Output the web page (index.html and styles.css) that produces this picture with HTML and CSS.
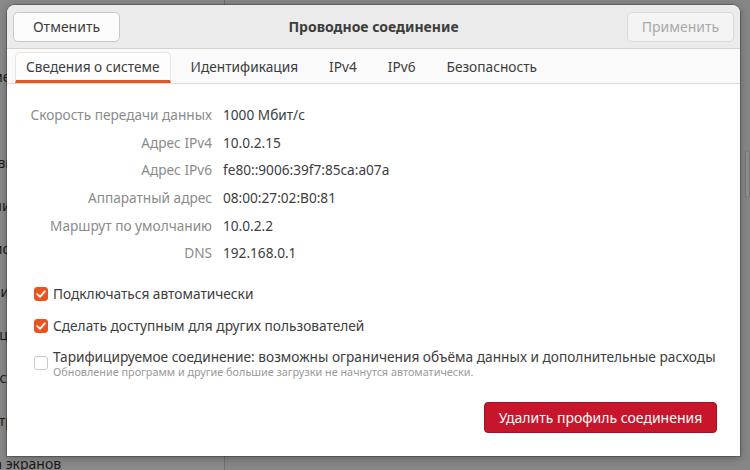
FILE: index.html
```html
<!DOCTYPE html>
<html lang="ru">
<head>
    <meta charset="UTF-8">
    <title>Проводное соединение</title>
    <link rel="stylesheet" href="styles.css">
</head>
<body>

<!-- Settings window behind the dialog (dimmed) -->
<div class="backdrop">
    <aside class="sidebar">
        <div class="side-list">
            <div class="side-item">Сетевой</div>
            <div class="side-item">Буфер обмен</div>
            <div class="side-item">Фон</div>
            <div class="side-item">Внешний вид</div>
            <div class="side-item">Оповещения и уведомле</div>
            <div class="side-item">Поиск в систе</div>
            <div class="side-item">Приложение</div>
            <div class="side-item">Конфиденц</div>
            <div class="side-item">Общий досту</div>
            <div class="side-item">Звуки и устройства</div>
            <div class="side-item">Настройка экранов</div>
        </div>
    </aside>
    <main class="panel">
        <div class="panel-widget"></div>
    </main>
</div>

<!-- Dialog -->
<div class="dialog">
    <header class="dialog-header">
        <button class="btn">Отменить</button>
        <h1 class="dialog-title">Проводное соединение</h1>
        <button class="btn" disabled>Применить</button>
    </header>

    <nav class="tabs">
        <div class="tab active">Сведения о системе</div>
        <div class="tab">Идентификация</div>
        <div class="tab">IPv4</div>
        <div class="tab">IPv6</div>
        <div class="tab">Безопасность</div>
    </nav>

    <section class="content">
        <div class="info">
            <span class="info-label">Скорость передачи данных</span>
            <span class="info-value">1000 Мбит/с</span>
            <span class="info-label">Адрес IPv4</span>
            <span class="info-value">10.0.2.15</span>
            <span class="info-label">Адрес IPv6</span>
            <span class="info-value">fe80::9006:39f7:85ca:a07a</span>
            <span class="info-label">Аппаратный адрес</span>
            <span class="info-value">08:00:27:02:B0:81</span>
            <span class="info-label">Маршрут по умолчанию</span>
            <span class="info-value">10.0.2.2</span>
            <span class="info-label">DNS</span>
            <span class="info-value">192.168.0.1</span>
        </div>

        <div class="options">
            <label class="option">
                <span class="check checked">
                    <svg viewBox="0 0 14 14" width="14" height="14"><path d="M3.2 7.2 L6 9.8 L10.8 4.4" fill="none" stroke="#fff" stroke-width="1.8" stroke-linecap="round" stroke-linejoin="round"/></svg>
                </span>
                <span class="option-text">Подключаться автоматически</span>
            </label>
            <label class="option">
                <span class="check checked">
                    <svg viewBox="0 0 14 14" width="14" height="14"><path d="M3.2 7.2 L6 9.8 L10.8 4.4" fill="none" stroke="#fff" stroke-width="1.8" stroke-linecap="round" stroke-linejoin="round"/></svg>
                </span>
                <span class="option-text">Сделать доступным для других пользователей</span>
            </label>
            <label class="option multi">
                <span class="check"></span>
                <span class="option-text">
                    <span class="option-title">Тарифицируемое соединение: возможны ограничения объёма данных и дополнительные расходы</span>
                    <small class="option-hint">Обновление программ и другие большие загрузки не начнутся автоматически.</small>
                </span>
            </label>
        </div>

        <button class="btn-danger">Удалить профиль соединения</button>
    </section>
</div>

</body>
</html>
```

FILE: styles.css
```css
body {
    margin: 0;
    width: 750px;
    height: 470px;
    overflow: hidden;
    position: relative;
    font-family: 'Noto Sans', 'Open Sans', sans-serif;
    color: #3d3d3d;
    background: #878787;
}

/* Dimmed window behind */
.backdrop {
    display: flex;
    height: 470px;
}

.sidebar {
    width: 224px;
    border-right: 1px solid #6f6f6f;
    overflow: hidden;
    background: #898989;
}

.side-list {
    margin-left: -70px;
    padding-top: 24px;
    display: flex;
    flex-direction: column;
    gap: 23px;
}

.side-item {
    font-size: 14px;
    line-height: 20px;
    color: #1a1a1a;
    white-space: nowrap;
}

.panel {
    flex: 1;
    background: #868686;
    padding-top: 150px;
}

.panel-widget {
    margin-left: 520px;
    height: 46px;
    border: 1px solid #757575;
    border-radius: 5px;
    background: #8c8c8c;
}

/* Dialog */
.dialog {
    position: absolute;
    left: 7px;
    top: 5px;
    width: 733px;
    height: 451px;
    background: #fff;
    border-radius: 8px 8px 0 0;
    box-shadow: 0 0 0 1px rgba(0, 0, 0, 0.22), 0 2px 8px rgba(0, 0, 0, 0.3);
    display: flex;
    flex-direction: column;
    overflow: hidden;
}

.dialog-header {
    height: 43px;
    flex-shrink: 0;
    display: flex;
    align-items: center;
    justify-content: space-between;
    padding: 0 6px;
    background: #ebebeb;
    border-bottom: 1px solid #d6d1cd;
}

.dialog-title {
    margin: 0;
    font-size: 14px;
    font-weight: bold;
    color: #3d3d3d;
}

.btn {
    width: 107px;
    height: 30px;
    font-family: inherit;
    font-size: 14px;
    color: #3d3d3d;
    background: #fcfcfc;
    border: 1px solid #cdc7c2;
    border-radius: 5px;
}

.btn:disabled {
    color: #a9a9a9;
    background: #f4f4f4;
    border-color: #dcd8d4;
}

/* Tabs */
.tabs {
    height: 34px;
    flex-shrink: 0;
    display: flex;
    align-items: flex-end;
    gap: 9px;
    padding-left: 8px;
    background: #fafafa;
    border-bottom: 1px solid #dedad7;
}

.tab {
    height: 31px;
    box-sizing: border-box;
    padding: 0 11px 2px;
    display: flex;
    align-items: center;
    font-size: 13.7px;
    color: #3d3d3d;
}

.tab.active {
    background: #fdfdfd;
    border: 1px solid #ebe3de;
    border-bottom: 3px solid #e95420;
    border-radius: 5px 5px 0 0;
    padding: 0 10px;
}

/* Content */
.content {
    flex: 1;
    display: flex;
    flex-direction: column;
    padding: 17px 23px 23px 0;
}

.info {
    display: grid;
    grid-template-columns: 205px auto;
    grid-auto-rows: 27.6px;
    column-gap: 11px;
    align-items: center;
    font-size: 13.65px;
}

.info-label {
    text-align: right;
    color: #8b8b8b;
}

.info-value {
    color: #3d3d3d;
}

.options {
    margin-top: 17px;
    padding-left: 27px;
    display: flex;
    flex-direction: column;
    gap: 12px;
}

.option {
    display: flex;
    align-items: center;
    gap: 5px;
    font-size: 13.7px;
    line-height: 20px;
}

.option.multi {
    margin-top: 1px;
    align-items: flex-start;
}

.check {
    width: 14px;
    height: 14px;
    box-sizing: border-box;
    flex-shrink: 0;
    border: 1px solid #cdc7c2;
    border-radius: 3px;
    background: #fff;
    display: flex;
}

.option.multi .check {
    margin-top: 7px;
}

.check.checked {
    background: #e95420;
    border-color: #e95420;
}

.check svg {
    margin: -1px;
}

.option-text {
    display: flex;
    flex-direction: column;
}

.option-title {
    line-height: 16px;
}

.option-hint {
    font-size: 10.85px;
    line-height: 13px;
    color: #9a9a9a;
}

.btn-danger {
    margin-top: auto;
    align-self: flex-end;
    width: 233px;
    height: 31px;
    font-family: inherit;
    font-size: 14px;
    color: #fff;
    background: #c7162b;
    border: 1px solid #a3101f;
    border-radius: 4px;
}
```
